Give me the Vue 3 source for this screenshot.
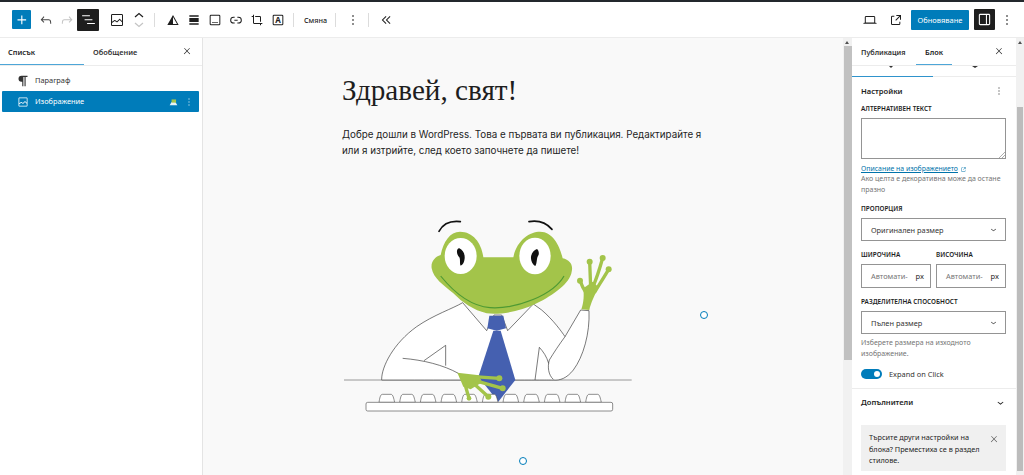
<script setup>
const icons = {
  plus: 'M11 12.5V17.5H12.5V12.5H17.5V11H12.5V6H11V11H6V12.5H11Z',
  undo: 'M18.3 11.7c-.6-.6-1.4-.9-2.3-.9H6.7l2.9-3.3-1.1-1-4.5 5L8.5 16l1-1-2.7-2.7H16c.5 0 .9.2 1.3.5 1 1 1 3.4 1 4.5v.3h1.5v-.2c0-1.5 0-4.3-1.5-5.7z',
  redo: 'M15.6 6.5l-1.1 1 2.9 3.3H8c-.9 0-1.7.3-2.3.9-1.4 1.5-1.4 4.2-1.4 5.6v.2h1.5v-.3c0-1.1 0-3.5 1-4.5.3-.3.7-.5 1.3-.5h9.2L14.5 15l1.1 1.1 4.6-4.6-4.6-5z',
  list: 'M3 6h11v1.5H3V6zm3.5 5.5h11V13h-11v-1.5zM21 17H10v1.5h11V17z',
  image: 'M19 3H5c-1.1 0-2 .9-2 2v14c0 1.1.9 2 2 2h14c1.1 0 2-.9 2-2V5c0-1.1-.9-2-2-2zM5 4.5h14c.3 0 .5.2.5.5v8.4l-3-2.9c-.3-.3-.8-.3-1 0L11.9 14 9 12c-.3-.2-.6-.2-.8 0l-3.6 2.6V5c-.1-.3.1-.5.4-.5zm14 15H5c-.3 0-.5-.2-.5-.5v-2.4l4.1-3 3 1.9c.3.2.7.2.9-.1L16 12l3.5 3.4V19c0 .3-.2.5-.5.5z',
  duotone: 'M12 4.5 L20.5 19.5 H3.5 Z M12 7.6 V18 H18 Z',
  align: 'M5 5h14v2H5zM5 9h14v6H5zM5 17h14v2H5z',
  caption: 'M6 4h12a2 2 0 0 1 2 2v12a2 2 0 0 1-2 2H6a2 2 0 0 1-2-2V6a2 2 0 0 1 2-2zm0 1.5a.5.5 0 0 0-.5.5v12a.5.5 0 0 0 .5.5h12a.5.5 0 0 0 .5-.5V6a.5.5 0 0 0-.5-.5H6zM8 15h2v1.5H8zM11 15h2v1.5h-2zM14 15h2v1.5h-2z',
  link: 'M10 17.389H8.444A5.194 5.194 0 1 1 8.444 7H10v1.5H8.444a3.694 3.694 0 0 0 0 7.389H10v1.5ZM14 7h1.556a5.194 5.194 0 0 1 0 10.39H14v-1.5h1.556a3.694 3.694 0 0 0 0-7.39H14V7Zm-4.5 6h5v-1.5h-5V13Z',
  crop: 'M18 20v-2h2v-1.5H7.75a.25.25 0 0 1-.25-.25V4H6v2H4v1.5h2v8.75c0 .966.784 1.75 1.75 1.75h8.75v2H18ZM9.273 7.5h6.977a.25.25 0 0 1 .25.25v6.977H18V7.75A1.75 1.75 0 0 0 16.25 6H9.273v1.5Z',
  frame: 'M6 4h12a2 2 0 0 1 2 2v12a2 2 0 0 1-2 2H6a2 2 0 0 1-2-2V6a2 2 0 0 1 2-2zm0 1.5a.5.5 0 0 0-.5.5v12a.5.5 0 0 0 .5.5h12a.5.5 0 0 0 .5-.5V6a.5.5 0 0 0-.5-.5H6z',
  desktop: 'M20.5 16h-.7V8c0-1.1-.9-2-2-2H6.2c-1.1 0-2 .9-2 2v8h-.7c-.8 0-1.5.7-1.5 1.5h20c0-.8-.7-1.5-1.5-1.5zM5.7 8c0-.3.2-.5.5-.5h11.6c.3 0 .5.2.5.5v7.6H5.7V8z',
  external: 'M19.5 4.5h-7V6h4.44l-5.97 5.97 1.06 1.06L18 7.06v4.44h1.5v-7Zm-13 1a2 2 0 0 0-2 2v10a2 2 0 0 0 2 2h10a2 2 0 0 0 2-2v-3H17v3a.5.5 0 0 1-.5.5h-10a.5.5 0 0 1-.5-.5v-10a.5.5 0 0 1 .5-.5h3V5.5h-3Z',
  sidebar: 'M18 4H6c-1.1 0-2 .9-2 2v12c0 1.1.9 2 2 2h12c1.1 0 2-.9 2-2V6c0-1.1-.9-2-2-2zm-4 14.5H6c-.3 0-.5-.2-.5-.5V6c0-.3.2-.5.5-.5h8v13zm4.5-.5c0 .3-.2.5-.5.5h-2.5v-13H18c.3 0 .5.2.5.5v12z',
  close: 'M13 11.8l6.1-6.3-1-1-6.1 6.2-6.1-6.2-1 1 6.1 6.3-6.5 6.7 1 1 6.5-6.6 6.5 6.6 1-1z',
  more: 'M13 19h-2v-2h2v2zm0-6h-2v-2h2v2zm0-6h-2V5h2v2z',
  para: 'M9 5a4 4 0 0 0 0 8h1v6h1.5V6.5H13V19h1.5V6.5H17V5H9z',
  chevron: 'M17.5 11.6 12 16l-5.5-4.4.9-1.2L12 14l4.5-3.6 1 1.2z',
  collapse: 'M11.6 6l1.1 1-5 5 5 5-1.1 1-6-6zM17.6 6l1.1 1-5 5 5 5-1.1 1-6-6z'
}
const keyPositions = [117, 179, 241, 303, 365, 427, 489, 551, 613, 675, 737]
</script>

<template>
  <div class="editor">
    <header class="toolbar">
      <button class="inserter"><svg viewBox="0 0 24 24"><path :d="icons.plus" /></svg></button>
      <button class="tool undo"><svg viewBox="0 0 24 24"><path :d="icons.undo" /></svg></button>
      <button class="tool redo"><svg viewBox="0 0 24 24"><path :d="icons.redo" /></svg></button>
      <button class="dark-btn list-btn"><svg viewBox="0 0 24 24"><path :d="icons.list" /></svg></button>
      <button class="tool image-tool"><svg viewBox="0 0 24 24"><path :d="icons.image" /></svg></button>
      <div class="movers">
        <svg viewBox="0 0 12 6"><path d="M2 5l4-3.5L10 5" /></svg>
        <svg class="off" viewBox="0 0 12 6"><path d="M2 1l4 3.5L10 1" /></svg>
      </div>
      <span class="sep"></span>
      <button class="tool wide"><svg viewBox="0 0 24 24"><path fill-rule="evenodd" :d="icons.duotone" /></svg></button>
      <button class="tool wide"><svg viewBox="0 0 24 24"><path :d="icons.align" /></svg></button>
      <button class="tool wide"><svg viewBox="0 0 24 24"><path :d="icons.caption" /></svg></button>
      <button class="tool wide"><svg viewBox="0 0 24 24"><path :d="icons.link" /></svg></button>
      <button class="tool wide"><svg viewBox="0 0 24 24"><path :d="icons.crop" /></svg></button>
      <button class="tool wide">
        <svg viewBox="0 0 24 24"><path :d="icons.frame" /><text x="12" y="16.5" text-anchor="middle" class="icon-letter">A</text></svg>
      </button>
      <span class="sep"></span>
      <span class="replace">Смяна</span>
      <span class="sep"></span>
      <button class="tool"><svg viewBox="0 0 24 24"><path :d="icons.more" /></svg></button>
      <span class="sep"></span>
      <button class="tool"><svg viewBox="0 0 24 24"><path :d="icons.collapse" /></svg></button>
      <div class="spacer"></div>
      <button class="tool"><svg viewBox="0 0 24 24"><path :d="icons.desktop" /></svg></button>
      <button class="tool ext"><svg viewBox="0 0 24 24"><path :d="icons.external" /></svg></button>
      <button class="publish">Обновяване</button>
      <button class="dark-btn side-btn"><svg viewBox="0 0 24 24"><path :d="icons.sidebar" /></svg></button>
      <button class="tool last"><svg viewBox="0 0 24 24"><path :d="icons.more" /></svg></button>
    </header>

    <div class="workspace">
      <aside class="list-panel">
        <div class="tabs">
          <span class="tab active">Списък</span>
          <span class="tab">Обобщение</span>
          <svg class="tabs-close" viewBox="0 0 24 24"><path :d="icons.close" /></svg>
        </div>
        <div class="rows">
          <div class="row">
            <svg viewBox="4 4 14 16"><path :d="icons.para" /></svg>
            <span>Параграф</span>
          </div>
          <div class="row selected">
            <svg viewBox="0 0 24 24"><path :d="icons.image" /></svg>
            <span>Изображение</span>
            <svg class="thumb" viewBox="0 0 14 12">
              <path d="M1 11l3-5h6l3 5z" fill="#e6f2f8" />
              <path d="M4 2h7v5H4z" fill="#a5c44d" />
            </svg>
            <svg class="row-more" viewBox="0 0 24 24"><path :d="icons.more" /></svg>
          </div>
        </div>
      </aside>

      <main class="canvas">
        <div class="content">
          <h1>Здравей, свят!</h1>
          <p>Добре дошли в WordPress. Това е първата ви публикация. Редактирайте я или я изтрийте, след което започнете да пишете!</p>
          <figure class="figure">
            <svg class="frog" viewBox="6 -93 1083 876">
              <path class="line" d="M12 540H875" />
              <path class="shirt" d="M125 538C125 500 160 430 230 380C280 345 340 325 368 308L440 392L462 345H485L503 392L580 312L605 330C640 360 665 395 675 410L722 330L747 332C750 400 730 470 700 510C680 535 660 542 640 540C590 540 500 540 125 540Z" />
              <path class="thin" d="M188 475C250 480 310 495 355 520M252 482L317 436V497M598 442L585 540M598 442C610 455 620 470 626 490M675 410C660 430 640 460 628 480C622 500 625 525 640 538" />
              <path class="tie" d="M448 347H490L498 385L470 392L442 385Z" />
              <path class="tie" d="M460 392H482L526 540L475 605L415 530Z" />
              <g v-for="x in keyPositions" :key="x">
                <path class="key" :d="`M${x} 607C${x + 2} 595 ${x + 4} 583 ${x + 10} 583H${x + 36}C${x + 42} 583 ${x + 44} 595 ${x + 47} 607Z`" />
              </g>
              <rect class="board" x="78" y="607" width="740" height="26" rx="5" />
              <path class="hand" d="M352 518L418 526L424 548L392 568L370 560Z" />
              <path class="finger" d="M400 530L478 535M405 542L488 565M400 550L445 590M374 550L387 595" />
              <circle class="green" cx="478" cy="535" r="9" />
              <circle class="green" cx="488" cy="565" r="9" />
              <circle class="green" cx="445" cy="590" r="9" />
              <circle class="green" cx="387" cy="595" r="7" />
              <path class="hand" d="M724 328C732 305 732 285 730 265L758 245L776 262C764 285 752 310 748 330Z" />
              <path class="finger" d="M720 242C726 258 730 266 736 275M749 185L752 262M788 174C778 210 768 240 758 262M806 208C790 235 775 258 765 275" />
              <circle class="green" cx="720" cy="242" r="9" />
              <circle class="green" cx="749" cy="185" r="9" />
              <circle class="green" cx="788" cy="174" r="9" />
              <circle class="green" cx="806" cy="208" r="9" />
              <path class="green" d="M430 172H520C530 120 570 95 600 95C640 95 660 140 668 175C690 180 700 195 695 215C690 250 640 285 590 310C540 335 480 345 440 340C400 330 370 310 340 280C310 255 280 235 275 205C272 185 285 170 302 165C310 125 330 95 360 95C400 95 425 130 430 172Z" />
              <path class="smile" d="M302 228C340 275 390 318 450 323C530 328 640 285 672 228" />
              <ellipse class="eye" cx="362" cy="168" rx="48" ry="54" />
              <ellipse class="eye" cx="585" cy="168" rx="47" ry="55" />
              <path class="pupil" d="M358 145C368 150 375 160 374 175C373 188 367 196 362 197C358 190 362 180 358 172C354 168 350 160 351 152C352 147 355 144 358 145Z" />
              <path class="pupil" d="M591 147C596 152 599 160 594 168C589 176 592 188 586 198C578 194 572 182 573 170C575 158 582 150 591 147Z" />
              <path class="brow" d="M297 94C310 70 335 62 361 65" />
              <path class="brow" d="M567 65C595 60 620 70 636 88" />
            </svg>
            <span class="handle handle-right"></span>
            <span class="handle handle-bottom"></span>
          </figure>
        </div>
      </main>
      <div class="scrollbar mid"><span class="arrow"></span><div class="scroll-thumb mid-thumb"></div></div>

      <aside class="settings">
        <div class="tabs side-tabs">
          <span class="tab">Публикация</span>
          <span class="tab active">Блок</span>
          <svg class="tabs-close" viewBox="0 0 24 24"><path :d="icons.close" /></svg>
        </div>
        <div class="style-tabs">
          <span class="peek peek-a"></span>
          <span class="peek peek-b"></span>
          <span class="style-line"></span>
        </div>

        <section class="group">
          <div class="group-head">
            <h2>Настройки</h2>
            <svg viewBox="0 0 24 24"><path :d="icons.more" /></svg>
          </div>
          <label class="label first">Алтернативен текст</label>
          <div class="textarea">
            <svg class="grip" viewBox="0 0 6 6"><path d="M0 6L6 0M3 6L6 3" /></svg>
          </div>
          <a class="doc-link">Описание на изображението<svg viewBox="0 0 24 24"><path :d="icons.external" /></svg></a>
          <p class="help">Ако целта е декоративна може да остане празно</p>
          <label class="label">Пропорция</label>
          <div class="select">
            <span>Оригинален размер</span>
            <svg viewBox="0 0 24 24"><path :d="icons.chevron" /></svg>
          </div>
          <div class="size-row">
            <div class="size-col">
              <label class="label">Широчина</label>
              <div class="size-input"><span class="ph">Автомати-</span><span class="unit">px</span></div>
            </div>
            <div class="size-col">
              <label class="label">Височина</label>
              <div class="size-input"><span class="ph">Автомати-</span><span class="unit">px</span></div>
            </div>
          </div>
          <label class="label res">Разделителна способност</label>
          <div class="select">
            <span>Пълен размер</span>
            <svg viewBox="0 0 24 24"><path :d="icons.chevron" /></svg>
          </div>
          <p class="help res-help">Изберете размера на изходното изображение.</p>
          <div class="toggle-row">
            <span class="toggle"><span class="knob"></span></span>
            <span>Expand on Click</span>
          </div>
        </section>

        <section class="advanced">
          <h2>Допълнители</h2>
          <svg viewBox="0 0 24 24"><path :d="icons.chevron" /></svg>
        </section>

        <div class="notice">
          <p>Търсите други настройки на блока? Преместиха се в раздел стилове.</p>
          <svg viewBox="0 0 24 24"><path :d="icons.close" /></svg>
        </div>
      </aside>
      <div class="scrollbar end"><span class="arrow"></span><div class="scroll-thumb end-thumb"></div></div>
    </div>
  </div>
</template>

<style scoped>
.editor {
  width: 1024px;
  height: 475px;
  overflow: hidden;
  background: #fff;
  border-top: 2px solid #23282d;
  box-sizing: border-box;
  font-family: "Noto Sans", sans-serif;
  color: #1e1e1e;
  display: flex;
  flex-direction: column;
}
button { border: 0; background: none; padding: 0; margin: 0; font-family: inherit; }
svg { display: block; fill: currentColor; }

.toolbar {
  height: 35px;
  flex: none;
  display: flex;
  align-items: center;
  padding-left: 12px;
  border-bottom: 1px solid #ececec;
  box-sizing: content-box;
}
.inserter {
  width: 19px;
  height: 19px;
  background: #007cba;
  color: #fff;
  border-radius: 1px;
  display: flex;
  align-items: center;
  justify-content: center;
  margin-right: 5px;
}
.inserter svg { width: 18px; height: 18px; }
.tool {
  width: 20px;
  height: 20px;
  display: flex;
  align-items: center;
  justify-content: center;
  color: #1e1e1e;
  flex: none;
}
.tool svg { width: 16px; height: 16px; }
.tool.wide { width: 21px; }
.undo { color: #444; margin-right: 1px; }
.redo { color: #c4c4c4; }
.dark-btn {
  width: 22px;
  height: 22px;
  background: #1e1e1e;
  color: #fff;
  border-radius: 1px;
  display: flex;
  align-items: center;
  justify-content: center;
  flex: none;
}
.dark-btn svg { width: 17px; height: 17px; }
.list-btn { margin-left: 0; margin-right: 8px; }
.image-tool { margin-right: 2px; }
.movers { width: 20px; display: flex; flex-direction: column; align-items: center; gap: 4px; }
.movers svg { width: 12px; height: 6px; fill: none; stroke: #1e1e1e; stroke-width: 1.2; }
.movers svg.off { stroke: #c4c4c4; }
.sep { width: 1px; height: 14px; background: #dcdcdc; margin: 0 7px 0 5px; flex: none; }
.icon-letter { font-size: 12px; font-weight: 700; font-family: "Noto Sans", sans-serif; }
.replace { width: 29px; text-align: center; font-size: 7.2px; font-weight: 500; margin-right: 0; }
.spacer { flex: 1; }
.ext { margin-left: 6px; margin-right: 5px; }
.publish {
  width: 58px;
  height: 20px;
  background: #007cba;
  color: #fff;
  font-size: 7.5px;
  border-radius: 1px;
  margin-right: 5px;
}
.side-btn { width: 21px; height: 21px; }
.last { margin-left: 2px; margin-right: 7px; width: 20px; }

.workspace { flex: 1; display: flex; min-height: 0; }

.list-panel {
  width: 202px;
  flex: none;
  border-right: 1px solid #e4e4e4;
  box-sizing: content-box;
  background: #fff;
}
.tabs {
  height: 27px;
  display: flex;
  align-items: center;
  border-bottom: 1px solid #ececec;
  position: relative;
  font-size: 7.4px;
  font-weight: 600;
}
.list-panel .tab { width: 84px; padding-left: 8px; box-sizing: border-box; height: 100%; display: flex; align-items: center; }
.list-panel .tab + .tab { padding-left: 9px; width: 90px; color: #333; }
.tab.active { box-shadow: inset 0 -1px 0 #4da6d8; }
.tabs-close { position: absolute; right: 10px; top: 8px; width: 10px; height: 10px; }
.rows { padding: 4px 3px 0 2px; }
.row {
  height: 21px;
  display: flex;
  align-items: center;
  font-size: 7.4px;
  color: #333;
  padding-left: 15px;
  gap: 6px;
}
.row > svg:first-child { width: 12px; height: 12px; }
.row > span { flex: 1; padding-bottom: 1px; }
.row.selected { background: #007cba; color: #fff; border-radius: 1px; }
.thumb { width: 9px; height: 8px; margin-right: -1px; }
.row-more { width: 12px; height: 12px; margin-right: 4px; }

.canvas {
  width: 640px;
  flex: none;
  background: #f9f9f9;
  overflow: hidden;
}
.content { width: 361px; margin-left: 139px; }
h1 {
  margin: 0;
  padding-top: 32px;
  font: 400 29.2px/40px "Liberation Serif", serif;
  color: #1e1e1e;
}
.content p {
  margin: 17px 0 0;
  font-family: Inter, sans-serif;
  font-size: 9.8px;
  line-height: 16px;
  color: #1e1e1e;
}
.figure { position: relative; margin: 10px 0 0; height: 292px; }
.frog { width: 361px; height: 292px; }
.line { fill: none; stroke: #666; stroke-width: 2; }
.shirt { fill: #fff; stroke: #222; stroke-width: 1.8; }
.thin { fill: none; stroke: #222; stroke-width: 1.8; }
.tie { fill: #4560b0; }
.key { fill: #fff; stroke: #444; stroke-width: 1.8; }
.board { fill: #fff; stroke: #555; stroke-width: 2; }
.hand, .green { fill: #a3c44a; }
.finger { fill: none; stroke: #a3c44a; stroke-width: 10; stroke-linecap: round; }
.smile { fill: none; stroke: #4e9a33; stroke-width: 3.5; }
.eye { fill: #fff; }
.pupil { fill: #111; }
.brow { fill: none; stroke: #111; stroke-width: 5; stroke-linecap: round; }
.handle {
  position: absolute;
  width: 8px;
  height: 8px;
  border: 1.5px solid #007cba;
  border-radius: 50%;
  background: #fff;
  box-sizing: border-box;
}
.handle-right { right: -5px; top: 142px; }
.handle-bottom { left: 177px; bottom: -4px; }

.scrollbar { width: 9px; flex: none; background: #f1f1f1; position: relative; }
.end { width: 8px; }
.arrow {
  position: absolute;
  top: 3px;
  left: 2px;
  border-left: 2.5px solid transparent;
  border-right: 2.5px solid transparent;
  border-bottom: 3px solid #505050;
}
.scroll-thumb { position: absolute; left: 1px; right: 0; background: #c1c1c1; }
.mid-thumb { top: 8px; height: 314px; }
.end-thumb { top: 69px; bottom: 4px; left: 1px; right: 1px; background: #bcbcbc; }

.settings { width: 164px; flex: none; position: relative; overflow: hidden; font-size: 8px; }
.side-tabs { padding-left: 9px; }
.side-tabs .tab { height: 100%; display: flex; align-items: center; }
.side-tabs .tab:first-child { width: 55px; color: #333; font-size: 7.2px; }
.side-tabs .tab.active { width: 36px; padding-left: 9px; box-sizing: border-box; font-size: 7.4px; }
.side-tabs .tabs-close { right: 12px; }
.style-tabs { height: 10px; border-bottom: 1px solid #ececec; position: relative; }
.style-line { position: absolute; left: 0; bottom: -1px; width: 81px; height: 1px; background: #2f93cc; }
.peek { position: absolute; top: 0; border-left: 2.5px solid transparent; border-right: 2.5px solid transparent; border-top: 2px solid #333; }
.peek-a { left: 37px; }
.peek-b { left: 120px; border-left-width: 3.5px; border-right-width: 3.5px; }
.group { padding: 8px 10px 0 9px; height: 312px; box-sizing: border-box; border-bottom: 1px solid #ececec; }
.group-head { display: flex; justify-content: space-between; align-items: center; height: 12px; }
.group-head svg { width: 12px; height: 12px; margin-right: 1px; }
h2 { margin: 0; font-size: 7.6px; font-weight: 600; }
.label { display: block; font-size: 6.4px; font-weight: 600; text-transform: uppercase; line-height: 9px; margin-top: 9px; }
.label.first { margin-top: 7px; }
.textarea { height: 41px; border: 1px solid #949494; box-sizing: border-box; margin-top: 5px; position: relative; }
.grip { position: absolute; right: 0; bottom: 0; width: 6px; height: 6px; fill: none; stroke: #999; stroke-width: 0.8; }
.doc-link { display: flex; align-items: center; color: #0073aa; text-decoration: underline; font-size: 6.9px; line-height: 10px; margin-top: 5px; }
.doc-link svg { width: 7px; height: 7px; margin-left: 2px; }
.help { margin: 0; color: #757575; font-size: 7px; line-height: 10.5px; }
.select {
  height: 23px;
  border: 1px solid #949494;
  box-sizing: border-box;
  margin-top: 5px;
  padding: 0 6px 0 9px;
  display: flex;
  align-items: center;
  justify-content: space-between;
  font-size: 7.4px;
  color: #333;
}
.select svg { width: 11px; height: 11px; }
.size-row { display: flex; gap: 5px; margin-top: 0; }
.size-col { flex: 1; min-width: 0; }
.size-col .label { margin-top: 9px; }
.size-input {
  height: 24px;
  border: 1px solid #949494;
  box-sizing: border-box;
  margin-top: 5px;
  display: flex;
  align-items: center;
  justify-content: space-between;
  padding: 0 6px 0 9px;
}
.ph { color: #757575; font-size: 7.4px; }
.unit { font-size: 7.5px; color: #1e1e1e; }
.res { margin-top: 9px; }
.res-help { margin-top: 4px; }
.toggle-row { display: flex; align-items: center; gap: 7px; margin-top: 10px; font-size: 7.4px; color: #333; }
.toggle { width: 21px; height: 10px; border-radius: 5px; background: #007cba; position: relative; display: block; }
.knob { position: absolute; right: 2px; top: 2px; width: 6px; height: 6px; border-radius: 50%; background: #fff; }
.advanced { display: flex; justify-content: space-between; align-items: center; padding: 3px 10px 0 9px; height: 20px; }
.advanced svg { width: 13px; height: 13px; margin-right: -1px; }
.notice {
  margin: 13px 10px 0 9px;
  height: 46px;
  background: #f0f0f0;
  padding: 7px 7px 0 8px;
  box-sizing: border-box;
  display: flex;
  gap: 4px;
  font-size: 7.3px;
  line-height: 11.5px;
  color: #1e1e1e;
}
.notice p { margin: 0; flex: 1; }
.notice svg { width: 10px; height: 10px; flex: none; margin-top: 2px; color: #555; }
</style>
